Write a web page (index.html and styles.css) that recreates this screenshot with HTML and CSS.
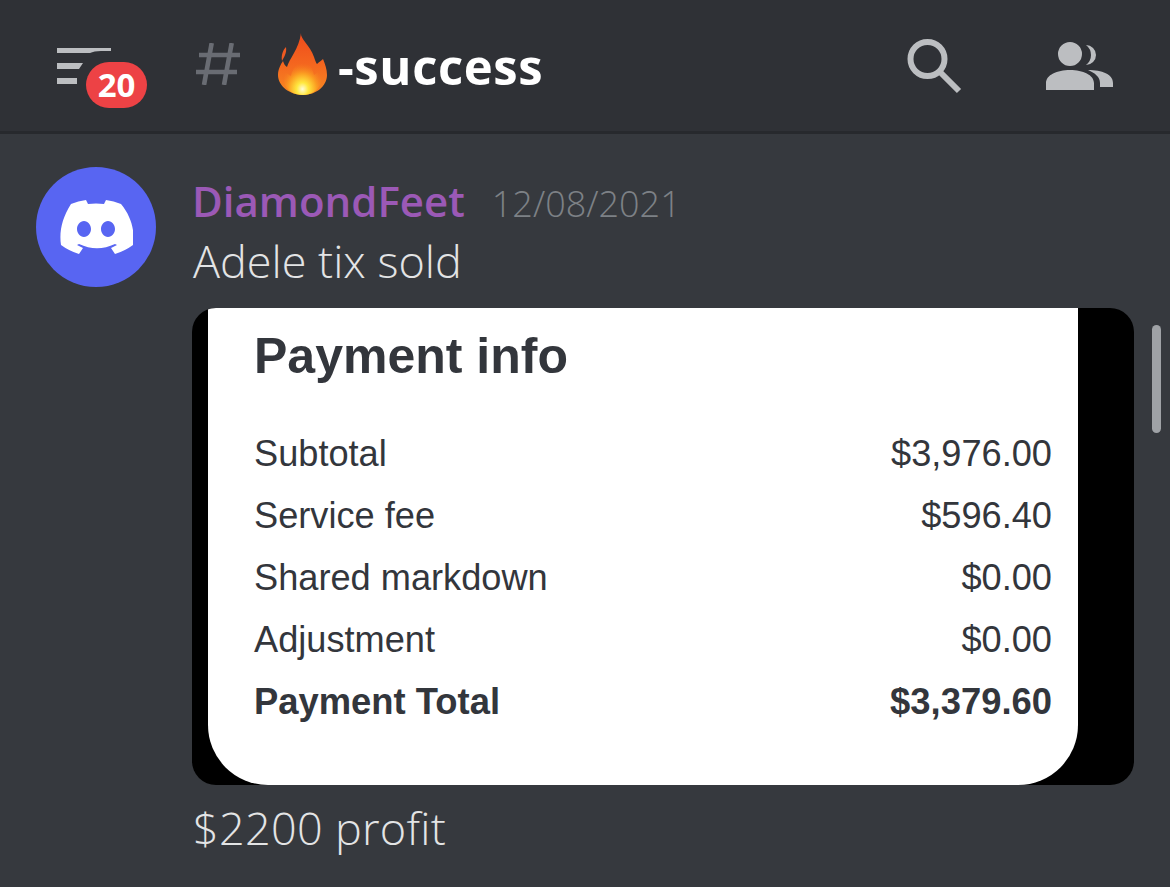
FILE: index.html
```html
<!DOCTYPE html>
<html lang="en">
<head>
<meta charset="utf-8">
<title>success</title>
<link rel="stylesheet" href="styles.css">
</head>
<body>
<div class="app">
  <header class="topbar">
    <div class="menu">
      <svg class="menu-icon" viewBox="0 0 54 36" width="54" height="36"><path fill="#bcbec1" d="M0 0h54v3H44q-7 0-11 2H0zM0 15h26l-4 6H0zM0 30h20v6H0z"/></svg>
      <span class="badge">20</span>
    </div>
    <svg class="hash" viewBox="0 0 46 42" width="46" height="42"><path fill="none" stroke="#696c73" stroke-width="4.6" d="M17.700 0 10 42M37.700 0 30 42M5 12h41M2 29h41"/></svg>
    <svg class="flame" viewBox="0 0 50 63" width="50" height="63">
      <defs>
        <linearGradient id="fl" x1="0" y1="0" x2="0" y2="1"><stop offset="0" stop-color="#ee4a1c"/><stop offset=".5" stop-color="#f4661f"/><stop offset="1" stop-color="#f68a22"/></linearGradient>
        <radialGradient id="core" cx=".5" cy=".86" r=".62"><stop offset="0" stop-color="#fffbd8"/><stop offset=".25" stop-color="#ffe83f"/><stop offset=".6" stop-color="#fb9f22"/><stop offset="1" stop-color="#f5711f" stop-opacity="0"/></radialGradient>
      </defs>
      <path fill="#ef5a22" d="M8 14C5 17 3 22 4 28 6 24 9 20 8 14z"/>
      <path fill="url(#fl)" d="M23 0C22 6 32 12 36 24 37 27 38 30 39 31 41 29 44 27 45 26 47 31 49 36 49 42 49 53 38 62 25 62 12 62 0 53 0 42 0 36 3 31 5 28 6 31 7 33 9 34 11 26 21 16 23 0z"/>
      <path fill="url(#core)" d="M25 20C27 28 34 32 36 42 38 41 40 39 41 38 43 42 44 46 43 50 40 58 33 62 25 62 16 62 9 58 6 50 5 46 6 42 8 39 10 41 11 42 13 43 14 34 23 30 25 20z"/>
    </svg>
    <h1 class="channel">-success</h1>
    <svg class="search" viewBox="0 0 56 56" width="56" height="56"><circle cx="21.500" cy="20" r="17" fill="none" stroke="#bcbec1" stroke-width="6"/><path fill="none" stroke="#bcbec1" stroke-width="6" d="M33 32l20 20"/></svg>
    <svg class="people" viewBox="0 0 68 50" width="68" height="50"><path fill="#bcbec1" d="M24 1a12 12 0 1 1 0 24 12 12 0 0 1 0-24zM0 49v-7c0-8 11-13 24-13s24 5 24 13v7z"/><path fill="#bcbec1" d="M40 4a10 10 0 1 1 0 20q5-4 5-10t-5-10zM42 29c14 0 25 4 25 13v4H54v-4c0-6-5-10-12-13z"/></svg>
  </header>
  <main class="chat">
    <div class="avatar">
      <svg viewBox="0 0 72 56" width="74" height="56"><path fill="#fff" d="M61 5A59 59 0 0 0 46 1l-2 4a55 55 0 0 0-16 0l-2-4a59 59 0 0 0-15 4C2 19-1 33 1 46a59 59 0 0 0 18 9l4-6-6-3 2-1a42 42 0 0 0 36 0l2 1-6 3 4 6a59 59 0 0 0 18-9c2-15-2-29-12-41zM24 38c-4 0-7-4-7-8s3-8 7-8 7 4 7 8-3 8-7 8zm24 0c-4 0-7-4-7-8s3-8 7-8 7 4 7 8-3 8-7 8z"/></svg>
    </div>
    <div class="message">
      <div class="meta">
        <span class="author">DiamondFeet</span>
        <time class="date">12/08/2021</time>
      </div>
      <p class="text">Adele tix sold</p>
      <figure class="shot">
        <div class="sheet">
          <h2 class="sheet-title">Payment info</h2>
          <div class="row"><span>Subtotal</span><span>$3,976.00</span></div>
          <div class="row"><span>Service fee</span><span>$596.40</span></div>
          <div class="row"><span>Shared markdown</span><span>$0.00</span></div>
          <div class="row"><span>Adjustment</span><span>$0.00</span></div>
          <div class="row total"><span>Payment Total</span><span>$3,379.60</span></div>
        </div>
      </figure>
      <p class="text profit">$2200 profit</p>
    </div>
  </main>
  <div class="scrollbar"></div>
</div>
</body>
</html>
```
FILE: styles.css
```css
* { box-sizing: border-box; }
html, body { margin: 0; padding: 0; }
body { background: #36393e; }
.app {
  position: relative;
  width: 1170px;
  height: 887px;
  overflow: hidden;
  background: #36393e;
  font-family: "Open Sans", sans-serif;
}
.topbar {
  display: flex;
  align-items: center;
  height: 134px;
  padding-left: 57px;
  background: #2f3136;
  border-bottom: 3px solid #27292d;
}
.menu { position: relative; width: 54px; height: 36px; flex: none; }
.menu-icon { display: block; }
.badge {
  position: absolute;
  left: 29px;
  top: 14px;
  width: 61px;
  height: 46px;
  border-radius: 23px;
  background: #ed4245;
  color: #fff;
  font: 700 33px/46px "Open Sans", sans-serif;
  text-align: center;
}
.hash { margin-left: 83px; flex: none; margin-top: -3px; }
.flame { margin-left: 38px; flex: none; margin-top: -3px; }
.channel {
  margin: 0 0 0 10px;
  color: #fff;
  font: 700 49px/60px "Open Sans", sans-serif;
  letter-spacing: 0.6px;
  flex: 1;
}
.search { flex: none; margin-right: 84px; margin-top: 2px; }
.people { flex: none; margin-right: 56px; }
.chat {
  display: flex;
  padding: 33px 36px 0;
}
.avatar {
  flex: none;
  width: 120px;
  height: 120px;
  border-radius: 50%;
  background: #5865f2;
  display: flex;
  align-items: center;
  justify-content: center;
}
.message { margin-left: 36px; width: 942px; flex: none; }
.meta { display: flex; align-items: baseline; gap: 27px; height: 66px; padding-top: 6px; }
.author { color: #9b59b6; font: 600 42px/56px "Open Sans", sans-serif; }
.date { color: #7d8186; font: 300 36px/44px "Open Sans", sans-serif; }
.text {
  margin: 0;
  padding-left: 1px;
  color: #e3e4e5;
  font: 300 45px/56px "Open Sans", sans-serif;
}
.shot {
  margin: 19px 0 0;
  width: 942px;
  height: 477px;
  padding: 0 56px 0 16px;
  border-radius: 24px;
  background: #000;
  overflow: hidden;
}
.sheet {
  height: 477px;
  padding: 17px 26px 0 46px;
  background: #fff;
  border-radius: 0 0 60px 60px;
  color: #33363c;
  font-family: "Liberation Sans", Arial, sans-serif;
}
.sheet-title { margin: 0 0 36px; font: 700 50px/62px "Liberation Sans", Arial, sans-serif; }
.row {
  display: flex;
  justify-content: space-between;
  height: 62px;
  font-size: 36.200px;
  line-height: 62px;
}
.total { font-weight: 700; font-size: 36.400px; }
.profit { margin-top: 15px; letter-spacing: 0.3px; }
.scrollbar {
  position: absolute;
  left: 1152px;
  top: 325px;
  width: 9px;
  height: 108px;
  border-radius: 5px;
  background: #9fa2a6;
}
```
